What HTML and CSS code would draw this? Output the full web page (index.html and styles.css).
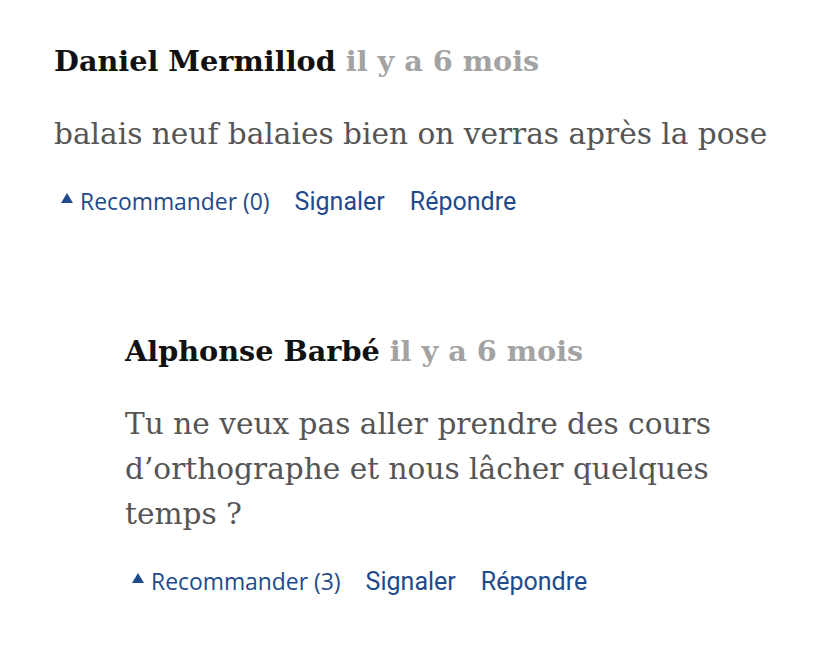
FILE: index.html
```html
<!DOCTYPE html>
<html lang="fr">
<head>
<meta charset="utf-8">
<link rel="stylesheet" href="styles.css">
</head>
<body>
<div class="thread">
  <div class="comment">
    <div class="head"><span class="name">Daniel Mermillod</span> <span class="time">il y a 6 mois</span></div>
    <p class="text">balais neuf balaies bien on verras après la pose</p>
    <div class="actions">
      <span class="rec"><span class="tri"></span>Recommander (0)</span>
      <span class="act">Signaler</span>
      <span class="act">Répondre</span>
    </div>
  </div>
  <div class="comment reply">
    <div class="head"><span class="name">Alphonse Barbé</span> <span class="time">il y a 6 mois</span></div>
    <p class="text">Tu ne veux pas aller prendre des cours d’orthographe et nous lâcher quelques temps ?</p>
    <div class="actions">
      <span class="rec"><span class="tri"></span>Recommander (3)</span>
      <span class="act">Signaler</span>
      <span class="act">Répondre</span>
    </div>
  </div>
</div>
</body>
</html>
```
FILE: styles.css
```css
html, body { margin: 0; padding: 0; background: #fff; }
.thread { padding: 40px 0 0 54px; width: 760px; }
.comment { margin-bottom: 113px; }
.comment:last-child { margin-bottom: 0; }
.reply { margin-left: 71px; width: 610px; }
.head { font-family: "DejaVu Serif", serif; font-weight: bold; font-size: 28.7px; line-height: 42px; }
.name { color: #111; }
.time { color: #a3a3a3; }
.text { font-family: "DejaVu Serif", serif; font-size: 29.6px; line-height: 45px; color: #555; margin: 30px 0 0; }
.actions { display: flex; align-items: baseline; margin-top: 29px; color: #1f4a8c; }
.rec { font-family: "Open Sans", sans-serif; font-size: 22.9px; margin-left: 7px; margin-right: 25px; }
.tri { display: inline-block; width: 0; height: 0; border-left: 6px solid transparent; border-right: 6px solid transparent; border-bottom: 10px solid #1f4a8c; margin-right: 7px; vertical-align: 7px; }
.act { font-family: Roboto, sans-serif; font-size: 25px; margin-right: 25px; }
```
